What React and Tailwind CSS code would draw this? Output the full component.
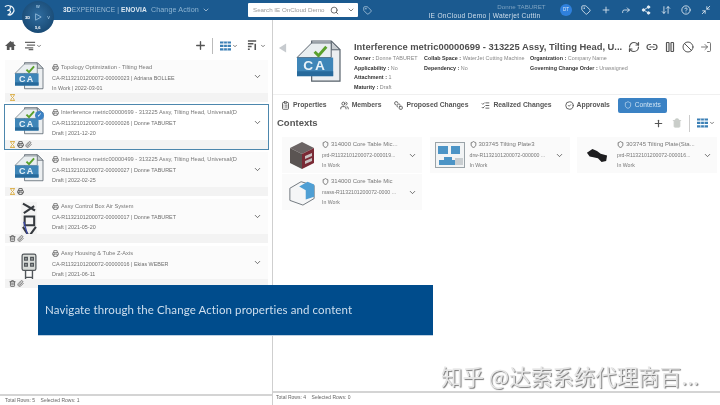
import { ChevronDown, Search, Plus, RefreshCw, Link2, Pause, Ban, LogIn, Tag, Share2, HelpCircle, Minimize2, Forward, Trash2, CheckCircle2, Users, ListChecks, ArrowDownUp, Paperclip, Hourglass, Printer, Shield, ClipboardList, SquareStack } from 'lucide-react';

const font = { fontFamily: '"Liberation Sans", Arial, sans-serif' };

const CaIcon = ({ className }) => (
  <svg viewBox="0 0 46 44" className={className}>
    <path d="M16 1h20l9 9v32H16z" fill="#eceff1" stroke="#56606a" strokeWidth="1.2" />
    <path d="M36 1v9h9z" fill="#c9ced2" stroke="#56606a" strokeWidth="1" />
    <path d="M1 18L16 3h20v15z" fill="#e9eef0" stroke="#56606a" strokeWidth="1" />
    <path d="M19 12l4 4 8-9" fill="none" stroke="#5aa02c" strokeWidth="3" />
    <rect x="1" y="18" width="37" height="19" fill="#3f86b8" />
    <rect x="1" y="32" width="37" height="5" fill="#276a9c" />
    <text x="19.5" y="31" textAnchor="middle" fontSize="14" fontWeight="700" letterSpacing="2" fill="#e8f2f8" fontFamily="Liberation Sans">CA</text>
  </svg>
);

const PartThumb = () => (
  <svg viewBox="0 0 22 44" className="w-[20px] h-[38px]">
    <rect x="2" y="1" width="18" height="42" fill="#f3f3f3" />
    <path d="M4 3l14 8M5 14l12-8M6 18h11v10H6zM4 30l7 11 8-11" fill="none" stroke="#35393e" strokeWidth="2.4" />
    <path d="M5 24l4 14" stroke="#3b48a8" strokeWidth="1.5" />
  </svg>
);

const HousingThumb = () => (
  <svg viewBox="0 0 22 44" className="w-[20px] h-[38px]">
    <rect x="3" y="7" width="16" height="19" rx="2" fill="#d9dcd9" stroke="#51565a" strokeWidth="1.4" />
    <path d="M6 11h3v3H6zM13 11h3v3h-3zM6 18h3v3H6zM13 18h3v3h-3zM7 26v16M15 26v16M7 34h8" fill="none" stroke="#51565a" strokeWidth="1.6" />
  </svg>
);

const rows = [
  { title: 'Topology Optimization - Tilting Head', id: 'CA-R1132101200072-00000023 | Adriana BOLLEE', state: 'In Work | 2022-03-01', badges: ['hour'], h: 'h-[42px]' },
  { title: 'Interference metric00000699 - 313225 Assy, Tilting Head, Universal(D', id: 'CA-R1132101200072-00000026 | Donne TABURET', state: 'Draft | 2021-12-20', badges: ['hour', 'print', 'clip'], selected: true, h: 'h-[44px]' },
  { title: 'Interference metric00000499 - 313225 Assy, Tilting Head, Universal(D', id: 'CA-R1132101200072-00000027 | Donne TABURET', state: 'Draft | 2022-02-25', badges: ['hour', 'print'], h: 'h-[44px]' },
  { title: 'Assy Control Box Air System', id: 'CA-R1132101200072-00000017 | Donne TABURET', state: 'Draft | 2021-05-20', badges: ['trash', 'clip'], thumb: <PartThumb />, h: 'h-[44px]' },
  { title: 'Assy Housing & Tube Z-Axis', id: 'CA-R1132101200072-00000016 | Ekias WEBER', state: 'Draft | 2021-06-11', badges: ['trash', 'clip'], thumb: <HousingThumb />, h: 'h-[42px]' },
];

const Badge = ({ kind }) => {
  if (kind === 'hour') return <Hourglass size={7} strokeWidth={3} className="text-[#d9a93c]" />;
  if (kind === 'print') return <Printer size={7} strokeWidth={3} className="text-[#555]" />;
  if (kind === 'trash') return <Trash2 size={7} strokeWidth={3} className="text-[#666]" />;
  return <Paperclip size={7} strokeWidth={3} className="text-[#777]" />;
};

const ListRow = ({ row }) => (
  <div className={`${row.h} relative flex flex-col bg-[#fbfbfb] ${row.selected ? 'outline outline-[1.5px] outline-[#4d87ad] bg-white' : ''}`}>
    <div className="flex flex-1 min-h-0">
      <div className="w-[47px] shrink-0 flex justify-center items-start pt-[2px]">
        {row.thumb || <CaIcon className="w-[30px] h-[28px]" />}
      </div>
      <div className="flex-1 min-w-0 pt-[2px] text-[#6f6f6f] text-[5.4px] leading-[10.7px]">
        <div className="flex items-center gap-[2px] text-[5.7px] text-[#777] whitespace-nowrap">
          <Printer size={7} strokeWidth={2.6} className="text-[#666] shrink-0" />
          <span>{row.title}</span>
        </div>
        <div>{row.id}</div>
        <div>{row.state}</div>
      </div>
      <div className="w-[22px] shrink-0 flex items-center justify-center text-[#333]">
        <ChevronDown size={9} strokeWidth={1.8} />
      </div>
    </div>
    <div className="h-[9px] shrink-0 bg-[#f3f3f3] flex items-center gap-[1px] pl-[4px]">
      {row.badges.map((b, i) => <Badge key={i} kind={b} />)}
    </div>
    {row.selected && (
      <div className="absolute left-[30px] top-[6px] w-[9px] h-[9px] rounded-full bg-[#3b82c4] flex items-center justify-center text-white text-[6px]">✓</div>
    )}
  </div>
);

const tabs = [
  { label: 'Properties', icon: ClipboardList },
  { label: 'Members', icon: Users },
  { label: 'Proposed Changes', icon: SquareStack },
  { label: 'Realized Changes', icon: ListChecks },
  { label: 'Approvals', icon: CheckCircle2 },
];

const contexts = [
  { title: '314000 Core Table Mic...', id: 'prd-R1132101200072-000019...', thumb: 'core' },
  { title: '303745 Tilting Plate3', id: 'drw-R1132101200072-000000 ...', thumb: 'drawing' },
  { title: '303745 Tilting Plate(Sta...', id: 'prd-R1132101200072-000016...', thumb: 'dark' },
  { title: '314000 Core Table Mic', id: 'mass-R1132101200072-0000 ...', thumb: 'cube' },
];

const Thumb = ({ kind }) => {
  if (kind === 'core') return (
    <svg viewBox="0 0 30 30" className="w-[30px] h-[30px]">
      <path d="M3 8l12-6 12 6-12 6z" fill="#6b6464" />
      <path d="M3 8l12 6v15L3 23z" fill="#5a5452" />
      <path d="M15 14l12-6v15l-12 6z" fill="#7a2a35" />
      <path d="M18 16l7-3v3l-7 3zM18 21l7-3v3l-7 3z" fill="#c9c2c2" />
    </svg>
  );
  if (kind === 'drawing') return (
    <svg viewBox="0 0 30 26" className="w-[30px] h-[26px]">
      <rect x=".5" y=".5" width="29" height="25" fill="#f2f4f5" stroke="#9aa3a8" />
      <path d="M3 4h10v8H3zM16 4h9v8h-9zM9 15h8v3h6v5H4v-5h5z" fill="#4c94c6" />
      <path d="M20 16h8v7h-8z" fill="#c9ced1" />
    </svg>
  );
  if (kind === 'dark') return (
    <svg viewBox="0 0 24 16" className="w-[22px] h-[15px]">
      <path d="M1 5l6-4 5 2 4 3 7 2-1 6-5 1-4-4-5-1-4-1z" fill="#1d1d1f" />
    </svg>
  );
  return (
    <svg viewBox="0 0 30 30" className="w-[28px] h-[28px]">
      <path d="M2 11l12-7 14 4v14l-12 7-14-5z" fill="#f5f6f7" stroke="#6a7278" />
      <path d="M12 9l9-5 7 3v13l-9 3V13z" fill="#4f9fd4" />
    </svg>
  );
};

const ContextCard = ({ item }) => (
  <div className="h-[36px] bg-[#fafafa] flex items-center">
    <div className="w-[40px] shrink-0 flex justify-center"><Thumb kind={item.thumb} /></div>
    <div className="flex-1 min-w-0 text-[5.2px] leading-[10.5px] text-[#777]">
      <div className="flex items-center gap-[2px] text-[6px] text-[#777]">
        <Shield size={7} strokeWidth={3} className="text-[#666] shrink-0" />
        <span className="whitespace-nowrap">{item.title}</span>
      </div>
      <div className="whitespace-nowrap">{item.id}</div>
      <div>In Work</div>
    </div>
    <div className="w-[20px] shrink-0 flex justify-center text-[#333]"><ChevronDown size={9} strokeWidth={1.8} /></div>
  </div>
);

const Attr = ({ label, value }) => (
  <div className="whitespace-nowrap"><span className="font-bold text-[#333]">{label} :</span> <span className="text-[#888]">{value}</span></div>
);

const GridIcon = () => (
  <svg viewBox="0 0 12 10" className="w-[11px] h-[10px]">
    <path d="M0 0h12v2.4H0zM0 3.7h12v2.4H0zM0 7.4h12v2.6H0z" fill="#3a7fb5" />
    <path d="M4 0v10M8 0v10" stroke="#fff" strokeWidth=".7" />
  </svg>
);

export default function App() {
  return (
    <div className="relative w-[720px] h-[405px] overflow-hidden bg-white flex flex-col blur-[0.35px]" style={font}>
      {/* top bar */}
      <header className="h-[20px] shrink-0 bg-[#1b5a90] flex items-center text-white">
        <svg viewBox="0 0 14 14" className="w-[13px] h-[13px] ml-[3px]">
          <path d="M2 3c3-2 6-2 6 1S3 7 6 7s3 3-1 5M8 2c3 1 5 4 3 7-1 2-3 3-5 3" fill="none" stroke="#e8f0f6" strokeWidth="1.3" />
        </svg>
        <div className="ml-[47px] text-[6.6px] tracking-[0.1px] flex items-center whitespace-nowrap w-[185px]">
          <b className="text-[#e6eef5]">3D</b><span className="text-[#9dbcd6]">EXPERIENCE</span>
          <span className="mx-[2px] text-[#9dbcd6]">|</span>
          <b className="text-[#dbe7f1]">ENOVIA</b>
          <span className="ml-[4px] text-[#8db4d2] text-[7.2px]">Change Action</span>
          <ChevronDown size={8} className="ml-[3px] text-[#cfe0ee]" />
        </div>
        <div className="w-[110px] h-[14px] bg-white rounded-[1px] flex items-center pl-[5px] text-[#999] text-[6.2px]">
          <span className="w-[77px] whitespace-nowrap overflow-hidden">Search IE OnCloud Demo</span>
          <Search size={9} className="text-[#444]" />
          <ChevronDown size={8} className="ml-[8px] text-[#444]" />
        </div>
        <Tag size={9} className="ml-[5px] text-[#b9d0e3]" />
        <div className="ml-[50px] w-[125px] text-center text-[6.2px] leading-[9px] pt-[1px]">
          <div className="text-[#7ea3c2] pl-[74px] whitespace-nowrap">Donne TABURET</div>
          <div className="text-[#d0dfec] whitespace-nowrap text-[6.6px] tracking-[0.3px]">IE OnCloud Demo | Waterjet Cuttin</div>
        </div>
        <div className="ml-[13px] w-[12px] h-[12px] rounded-full bg-[#2f80dd] flex items-center justify-center text-[4.5px] text-[#dbe9f8]">DT</div>
        <div className="ml-[9px] flex items-center gap-[10px] text-[#e4edf4]">
          <Tag size={10} />
          <Plus size={10} />
          <Forward size={10} />
          <Share2 size={10} fill="currentColor" />
          <ArrowDownUp size={10} />
          <HelpCircle size={10} />
          <Minimize2 size={10} />
        </div>
      </header>

      <div className="flex-1 min-h-0 flex">
        {/* left panel */}
        <aside className="w-[273px] shrink-0 border-r border-[#cfcfcf] flex flex-col">
          <div className="h-[40px] shrink-0 pt-[11px] px-[5px] flex items-center text-[#555]">
            <svg viewBox="0 0 12 12" className="w-[11px] h-[11px]"><path d="M6 1L0 6.5h2V11h3V8h2v3h3V6.5h2L9.5 4.2V2H8v.8z" fill="#555" /></svg>
            <div className="ml-[9px] flex items-center">
              <svg viewBox="0 0 12 10" className="w-[11px] h-[10px]"><path d="M0 1h11M2 4h9M0 7h9M4 9h5" stroke="#666" strokeWidth="1.5" /></svg>
              <ChevronDown size={6} strokeWidth={3} />
            </div>
            <Plus size={13} strokeWidth={2.5} className="ml-auto mr-[5px]" />
            <div className="w-px h-[16px] bg-[#bbb] mr-[7px]" />
            <GridIcon />
            <ChevronDown size={6} strokeWidth={3} className="ml-[1px] mr-[9px]" />
            <svg viewBox="0 0 12 12" className="w-[11px] h-[11px]"><path d="M1 1h9M1 4h6M1 7h4M1 10h2M9 4v7" stroke="#555" strokeWidth="1.7" fill="none" /></svg>
            <ChevronDown size={6} strokeWidth={3} className="ml-[2px] mr-[1px]" />
          </div>
          <div className="flex flex-col gap-[3px] pl-[5px] pr-[4px]">
            {rows.map((row) => <ListRow key={row.id} row={row} />)}
          </div>
          <div className="mt-auto h-[11px] border-t-2 border-[#d4d4d4] pl-[5px] text-[5px] leading-[9px] text-[#666] whitespace-pre">Total Rows: 5    Selected Rows: 1</div>
        </aside>

        {/* right panel */}
        <main className="flex-1 min-w-0 flex flex-col">
          <div className="h-[75px] shrink-0 flex pt-[20px] pl-[5px] border-b border-[#f0f0f0]">
            <svg viewBox="0 0 10 10" className="w-[9px] h-[10px] mt-[3px]"><path d="M9 0v10L1 5z" fill="#c7cbcf" /></svg>
            <CaIcon className="ml-[8px] w-[47px] h-[43px] shrink-0" />
            <div className="ml-[12px] flex-1 min-w-0">
              <div className="flex items-center">
                <div className="text-[9.4px] font-bold text-[#4f4f4f] whitespace-nowrap leading-[13px] w-[274px]">Interference metric00000699 - 313225 Assy, Tilting Head, U...</div>
                <div className="flex items-center gap-[6px] text-[#555]">
                  <RefreshCw size={12} strokeWidth={2.4} />
                  <Link2 size={12} strokeWidth={2.4} />
                  <Pause size={12} strokeWidth={2.4} />
                  <Ban size={12} strokeWidth={2} />
                  <LogIn size={12} strokeWidth={1.6} />
                </div>
              </div>
              <div className="mt-[1px] flex text-[5.4px] leading-[9.6px]">
                <div className="w-[70px]">
                  <Attr label="Owner" value="Donne TABURET" />
                  <Attr label="Applicability" value="No" />
                  <Attr label="Attachment" value="1" />
                  <Attr label="Maturity" value="Draft" />
                </div>
                <div className="w-[106px]">
                  <Attr label="Collab Space" value="WaterJet Cutting Machine" />
                  <Attr label="Dependency" value="No" />
                </div>
                <div>
                  <Attr label="Organization" value="Company Name" />
                  <Attr label="Governing Change Order" value="Unassigned" />
                </div>
              </div>
            </div>
          </div>

          <nav className="h-[20px] shrink-0 flex items-center pl-[8px] gap-[13px] text-[6.8px] text-[#555] font-semibold whitespace-nowrap">
            {tabs.map(({ label, icon: Icon }) => (
              <div key={label} className="flex items-center gap-[3px]">
                <Icon size={9} strokeWidth={2.4} className="text-[#555]" />
                <span>{label}</span>
              </div>
            ))}
            <div className="-ml-[5px] h-[15px] w-[49px] rounded-[2px] bg-[#3b82c4] flex items-center justify-center gap-[3px] text-[#cfe3f3] font-normal text-[6.6px]">
              <Shield size={8} />
              <span>Contexts</span>
            </div>
          </nav>

          <div className="h-[16px] shrink-0 flex items-center pl-[4px] text-[#555]">
            <h2 className="text-[9.5px] font-bold">Contexts</h2>
            <Plus size={11} strokeWidth={2.6} className="ml-auto" />
            <Trash2 size={10} className="ml-[8px] text-[#c9cdc9]" fill="currentColor" />
            <div className="w-px h-[17px] bg-[#ccc] ml-[7px] mr-[7px]" />
            <GridIcon />
            <ChevronDown size={6} strokeWidth={3} className="ml-[1px] mr-[5px]" />
          </div>

          <div className="mt-[6px] grid grid-cols-[140px_140px_140px] gap-x-[7.5px] gap-y-[1px] pl-[9px]">
            {contexts.map((item) => <ContextCard key={item.id} item={item} />)}
          </div>

          <div className="mt-auto h-[14px] border-t-2 border-[#d4d4d4] pl-[3px] text-[5px] leading-[9px] text-[#666] whitespace-pre">Total Rows: 4    Selected Rows: 0</div>
        </main>
      </div>

      {/* compass */}
      <div className="absolute left-[22px] top-[1px] w-[32px] h-[32px] rounded-full bg-[radial-gradient(circle_at_50%_45%,#2f6c9f,#123f66)] flex items-center justify-center text-[#9ec3df]">
        <svg viewBox="0 0 10 10" className="w-[8px] h-[8px]"><path d="M2 1l7 4-7 4z" fill="none" stroke="currentColor" strokeWidth="1" /></svg>
        <span className="absolute top-[3px] left-[14px] text-[4px] font-bold">W</span>
        <span className="absolute top-[14px] left-[3px] text-[4px] font-bold text-white">3D</span>
        <span className="absolute top-[14px] right-[4px] text-[4px] font-bold">V</span>
        <span className="absolute bottom-[2px] left-[13px] text-[4px] font-bold text-white">5,6</span>
      </div>

      {/* callout */}
      <div className="absolute left-[38px] top-[285px] w-[395px] h-[51px] bg-[#004c8c] border-b border-[#bcd0e2] flex items-center pl-[7px] text-[#cfdfee] text-[11.5px] tracking-[0.1px]" style={{ fontFamily: 'Lato, sans-serif' }}>
        Navigate through the Change Action properties and content
      </div>

      {/* watermark */}
      <div className="absolute left-[441px] top-[363px] text-[21.5px] leading-[26px] text-[#e6e6e6] whitespace-nowrap [text-shadow:1px_1px_1px_#777]" style={{ fontFamily: '"Noto Sans CJK SC", sans-serif' }}>
        知乎 @达索系统代理商百...
      </div>
    </div>
  );
}
